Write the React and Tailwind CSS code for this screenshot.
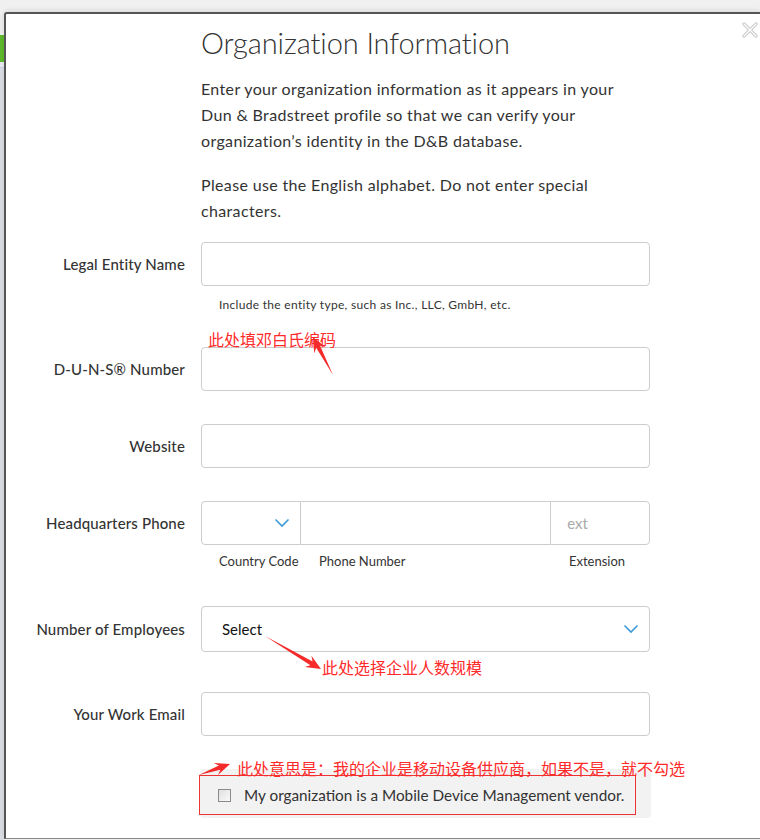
import React from "react";

function arrowPoints(x1, y1, x2, y2) {
  const dx = x2 - x1;
  const dy = y2 - y1;
  const len = Math.sqrt(dx * dx + dy * dy);
  const ux = dx / len;
  const uy = dy / len;
  const px = -uy;
  const py = ux;
  const headLen = 15;
  const headW = 6.5;
  const shaftW = 2.2;
  const bx = x2 - ux * headLen;
  const by = y2 - uy * headLen;
  const sx = x2 - ux * (headLen - 4);
  const sy = y2 - uy * (headLen - 4);
  const pts = [
    [x1, y1],
    [sx + px * shaftW, sy + py * shaftW],
    [bx + px * headW, by + py * headW],
    [x2, y2],
    [bx - px * headW, by - py * headW],
    [sx - px * shaftW, sy - py * shaftW],
  ];
  return pts.map((p) => p[0].toFixed(1) + "," + p[1].toFixed(1)).join(" ");
}

function Chevron() {
  return (
    <svg width="16" height="10" viewBox="0 0 16 10" fill="none">
      <path d="M1.5 1.5 L8 8 L14.5 1.5" stroke="#3d9ad6" strokeWidth="1.6" />
    </svg>
  );
}

function Row({ label, children, className }) {
  return (
    <div className={"grid grid-cols-[179px_449px] gap-x-[16px] items-center " + (className || "")}>
      <div className="text-right text-[15px] text-[#333] font-medium tracking-[0.15px]">{label}</div>
      {children}
    </div>
  );
}

function TextInput() {
  return <div className="h-[44px] border border-[#cccccc] rounded-[4px] bg-white" />;
}

export default function App() {
  const font = { fontFamily: "Lato, 'Noto Sans', 'Noto Sans CJK SC', sans-serif" };
  const cjk = "[font-family:'Noto_Sans_CJK_SC',sans-serif]";
  return (
    <div className="relative w-[760px] h-[840px] bg-[#f0f0f0] overflow-hidden flex" style={font}>
      {/* left strip of underlying page */}
      <div className="w-[4px] flex flex-col pt-[14px]">
        <div className="h-[21px] bg-[#ececec]" />
        <div className="h-[27px] bg-[#5cb82a]" />
        <div className="h-[6px] bg-[#e6e9f0] border-b border-[#c6d3e6]" />
        <div className="flex-1 bg-[#d9dbe3]" />
      </div>
      {/* modal */}
      <div className="flex-1 mt-[12px] mb-[1px] bg-white border-t-2 border-l-2 border-[#555] border-b border-b-[#888] rounded-tl-[3px] flex flex-col pt-[11px] relative shadow-[0_-2px_4px_rgba(0,0,0,0.08)]">
        <div className="pl-[195px]">
          <h1 className="text-[29px] leading-[36px] font-light text-[#333] tracking-[-0.1px]">Organization Information</h1>
          <p className="mt-[15px] text-[16px] leading-[26px] text-[#333] w-[428px] tracking-[0.35px]">
            Enter your organization information as it appears in your Dun &amp; Bradstreet profile so that we can verify your organization’s identity in the D&amp;B database.
          </p>
          <p className="mt-[18px] text-[16px] leading-[26px] text-[#333] w-[420px] tracking-[0.35px]">
            Please use the English alphabet. Do not enter special characters.
          </p>
        </div>

        <Row label="Legal Entity Name" className="mt-[18px]">
          <TextInput />
        </Row>
        <div className="pl-[213px] mt-[10px] text-[12px] leading-[18px] text-[#333] tracking-[0.3px]">
          Include the entity type, such as Inc., LLC, GmbH, etc.
        </div>

        <Row label="D-U-N-S® Number" className="mt-[33px]">
          <TextInput />
        </Row>

        <Row label="Website" className="mt-[33px]">
          <TextInput />
        </Row>

        <Row label="Headquarters Phone" className="mt-[33px]">
          <div className="h-[44px] flex">
            <div className="w-[100px] border border-[#cccccc] rounded-l-[4px] flex items-center justify-end pr-[10px]">
              <Chevron />
            </div>
            <div className="w-[250px] border-y border-[#cccccc]" />
            <div className="w-[100px] border border-[#cccccc] rounded-r-[4px] flex items-center pl-[16px] text-[15px] text-[#aaa]">
              ext
            </div>
          </div>
        </Row>
        <div className="flex mt-[7px] text-[13px] leading-[18px] text-[#333]">
          <div className="pl-[213px] w-[313px]">Country Code</div>
          <div className="w-[250px]">Phone Number</div>
          <div>Extension</div>
        </div>

        <Row label="Number of Employees" className="mt-[36px]">
          <div className="h-[46px] border border-[#cccccc] rounded-[4px] flex items-center justify-between pl-[20px] pr-[10px]">
            <span className="text-[15px] text-[#111]">Select</span>
            <Chevron />
          </div>
        </Row>

        <Row label="Your Work Email" className="mt-[40px]">
          <TextInput />
        </Row>

        <div className="pl-[194px] mt-[33px]">
          <div className="w-[451px] h-[49px] bg-[#f2f2f2] rounded-[4px] pt-[6px]">
            <div className="w-[437px] h-[40px] border border-[#ee3333] -ml-[1px] flex items-center pl-[18px] gap-[13px]">
              <div className="w-[13px] h-[13px] shrink-0 border border-[#8a8a8a] bg-gradient-to-br from-[#e0e0e0] to-[#fafafa]" />
              <span className="text-[15.3px] text-[#333] whitespace-nowrap">My organization is a Mobile Device Management vendor.</span>
            </div>
          </div>
        </div>

        {/* close icon */}
        <div className="absolute right-[2px] top-[8px]">
          <svg width="16" height="16" viewBox="0 0 16 16" fill="none">
            <path d="M2 2 L14 14 M14 2 L2 14" stroke="#c8c8c8" strokeWidth="3.2" strokeLinecap="round" />
            <path d="M2 2 L14 14 M14 2 L2 14" stroke="#ffffff" strokeWidth="1.3" strokeLinecap="round" />
          </svg>
        </div>
      </div>

      {/* annotations */}
      <div className={"absolute left-[208px] top-[328px] text-[16px] leading-[22px] text-[#ff2a2a] " + cjk}>此处填邓白氏编码</div>
      <div className={"absolute left-[322px] top-[656px] text-[16px] leading-[22px] text-[#ff2a2a] " + cjk}>此处选择企业人数规模</div>
      <div className={"absolute left-[237px] top-[757px] text-[16px] leading-[22px] text-[#ff2a2a] " + cjk}>此处意思是：我的企业是移动设备供应商，如果不是，就不勾选</div>
      <svg className="absolute left-0 top-0 pointer-events-none" width="760" height="840">
        <polygon points={arrowPoints(333, 375, 313, 337)} fill="#f52a2a" />
        <polygon points={arrowPoints(265, 636, 321, 669)} fill="#f52a2a" />
        <polygon points={arrowPoints(199, 775, 230, 764)} fill="#f52a2a" />
      </svg>
    </div>
  );
}
